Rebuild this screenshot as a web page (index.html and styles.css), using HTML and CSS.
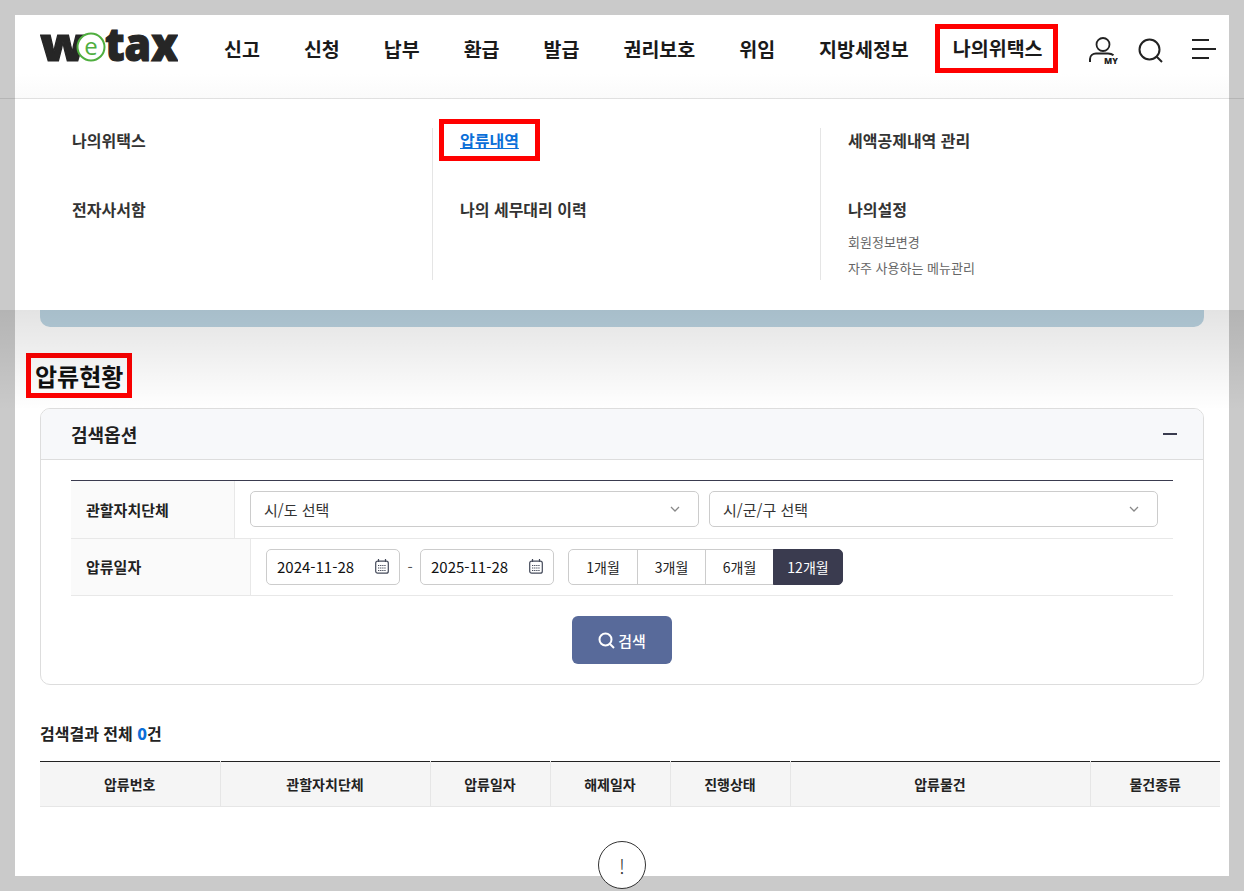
FILE: index.html
```html
<!DOCTYPE html>
<html lang="ko">
<head>
<meta charset="utf-8">
<title>wetax 압류현황</title>
<link rel="stylesheet" href="styles.css">
</head>
<body>
<div class="frame">
  <header class="header">
    <a class="logo" href="#" aria-label="wetax">
      <svg width="138" height="36" viewBox="0 0 138 36">
        <text class="logo-text" x="0" y="33" textLength="46" lengthAdjust="spacingAndGlyphs">w</text>
        <circle cx="51" cy="19" r="13.5" fill="#fff" stroke="#4fae3f" stroke-width="2"/>
        <text class="logo-e" x="51" y="27" text-anchor="middle">e</text>
        <text class="logo-text" x="65" y="33" textLength="73" lengthAdjust="spacingAndGlyphs">tax</text>
      </svg>
    </a>
    <nav class="nav">
      <a href="#">신고</a>
      <a href="#">신청</a>
      <a href="#">납부</a>
      <a href="#">환급</a>
      <a href="#">발급</a>
      <a href="#">권리보호</a>
      <a href="#">위임</a>
      <a href="#">지방세정보</a>
      <a href="#" class="nav-active">나의위택스</a>
    </nav>
    <div class="tools">
      <svg class="icon-my" width="30" height="30" viewBox="0 0 30 30">
        <circle cx="15" cy="8.5" r="6.5" fill="none" stroke="#222" stroke-width="1.8"/>
        <path d="M2 26v-3c0-3.500 3-5.500 6-5.500h12c2 0 4 .5 5.500 1.800" fill="none" stroke="#222" stroke-width="2"/>
        <text x="16" y="28" class="my-text">MY</text>
      </svg>
      <svg class="icon-search" width="26" height="26" viewBox="0 0 26 26">
        <circle cx="11.500" cy="11.500" r="10" fill="none" stroke="#222" stroke-width="2"/>
        <path d="M18.500 18.500L24 24" stroke="#222" stroke-width="2"/>
      </svg>
      <svg class="icon-menu" width="24" height="22" viewBox="0 0 24 22">
        <path d="M0 2h17M0 11h24M0 20h17" stroke="#222" stroke-width="2"/>
      </svg>
    </div>
  </header>

  <main class="main">
    <div class="band"></div>
    <h1 class="title">압류현황</h1>

    <section class="panel">
      <div class="panel-head">
        <h2>검색옵션</h2>
        <span class="minus"></span>
      </div>
      <div class="panel-body">
        <div class="form">
          <div class="form-row">
            <div class="form-label">관할자치단체</div>
            <div class="form-field">
              <div class="select"><span>시/도 선택</span>
                <svg width="10" height="6" viewBox="0 0 10 6"><path d="M1 1l4 4 4-4" fill="none" stroke="#888" stroke-width="1.300"/></svg>
              </div>
              <div class="select"><span>시/군/구 선택</span>
                <svg width="10" height="6" viewBox="0 0 10 6"><path d="M1 1l4 4 4-4" fill="none" stroke="#888" stroke-width="1.300"/></svg>
              </div>
            </div>
          </div>
          <div class="form-row">
            <div class="form-label">압류일자</div>
            <div class="form-field">
              <div class="date"><span>2024-11-28</span>
                <svg width="14" height="15" viewBox="0 0 14 15"><rect x=".7" y="2.200" width="12.600" height="12" rx="2" fill="none" stroke="#444a5a" stroke-width="1.200"/><path d="M3.500 0v3M10.500 0v3" stroke="#444a5a" stroke-width="1.200"/><path d="M3 6.500h8M3 9h8M3 11.500h8" stroke="#444a5a" stroke-width="1.200" stroke-dasharray="1.300 .8"/></svg>
              </div>
              <span class="dash">-</span>
              <div class="date"><span>2025-11-28</span>
                <svg width="14" height="15" viewBox="0 0 14 15"><rect x=".7" y="2.200" width="12.600" height="12" rx="2" fill="none" stroke="#444a5a" stroke-width="1.200"/><path d="M3.500 0v3M10.500 0v3" stroke="#444a5a" stroke-width="1.200"/><path d="M3 6.500h8M3 9h8M3 11.500h8" stroke="#444a5a" stroke-width="1.200" stroke-dasharray="1.300 .8"/></svg>
              </div>
              <div class="periods">
                <a href="#">1개월</a>
                <a href="#">3개월</a>
                <a href="#">6개월</a>
                <a href="#" class="on">12개월</a>
              </div>
            </div>
          </div>
        </div>
        <div class="actions">
          <button class="search-btn" type="button">
            <svg width="17" height="17" viewBox="0 0 17 17"><circle cx="7.500" cy="7.500" r="6" fill="none" stroke="#fff" stroke-width="2"/><path d="M12 12l4 4" stroke="#fff" stroke-width="2"/></svg>
            검색
          </button>
        </div>
      </div>
    </section>

    <p class="result">검색결과 전체 <b>0</b>건</p>

    <table class="grid">
      <colgroup>
        <col class="c1"><col class="c2"><col class="c3"><col class="c3"><col class="c3"><col class="c4"><col>
      </colgroup>
      <thead>
        <tr>
          <th>압류번호</th><th>관할자치단체</th><th>압류일자</th><th>해제일자</th><th>진행상태</th><th>압류물건</th><th>물건종류</th>
        </tr>
      </thead>
    </table>

    <div class="empty"><span>!</span></div>
  </main>

  <div class="mega">
    <div class="mega-col first">
      <a class="m1" href="#">나의위택스</a>
      <a class="m1" href="#">전자사서함</a>
    </div>
    <div class="mega-col">
      <a class="m1 mark" href="#">압류내역</a>
      <a class="m1" href="#">나의 세무대리 이력</a>
    </div>
    <div class="mega-col">
      <a class="m1" href="#">세액공제내역 관리</a>
      <a class="m1" href="#">나의설정</a>
      <a class="m2" href="#">회원정보변경</a>
      <a class="m2" href="#">자주 사용하는 메뉴관리</a>
    </div>
  </div>
</div>
<div class="rule"></div>
<div class="shade"></div>
</body>
</html>
```
FILE: styles.css
```css
* { box-sizing: border-box; }
html, body { margin: 0; height: 891px; overflow: hidden; }
body {
  position: relative;
  background: #cacaca;
  font-family: "Noto Sans CJK KR", "Noto Sans", sans-serif;
  color: #222;
  padding: 15px;
}
a { color: inherit; text-decoration: none; }

.frame {
  position: relative;
  width: 1214px;
  height: 861px;
  background: #fff;
}

.header {
  display: flex;
  align-items: center;
  height: 84px;
  padding: 0 13px 0 25px;
  background: linear-gradient(#fff 70%, #fafafa);
}
.logo { display: block; width: 138px; height: 36px; margin-top: -23px; }
.logo svg { display: block; }
.logo-text {
  font-family: "Open Sans", sans-serif;
  font-weight: 800;
  font-size: 46px;
  fill: #262626;
  stroke: #262626;
  stroke-width: 1.2px;
}
.logo-e {
  font-family: "Open Sans", sans-serif;
  font-size: 24px;
  fill: #4fae3f;
}

.nav {
  display: flex;
  align-items: center;
  gap: 44px;
  margin-left: 46px;
  margin-top: -17px;
  font-size: 19.500px;
  font-weight: 700;
  color: #1a1a1a;
  white-space: nowrap;
}
.nav-active {
  border: 5px solid #f00;
  padding: 4px 10px 6px 13px;
  margin: 0 -15px 0 -18px;
}

.tools { display: flex; align-items: center; margin-left: auto; margin-top: -17px; }
.icon-my { margin-right: 20px; margin-top: 4px; }
.icon-search { margin-right: 28px; margin-top: 4px; }
.my-text { font-family: "Open Sans", sans-serif; font-size: 8.500px; font-weight: 800; fill: #222; }

.main { padding: 0 25px; }
.band {
  height: 228px;
  background: #bcd5e3;
  border-radius: 0 0 10px 10px;
}
.title {
  width: max-content;
  margin: 26px 0 10px -14px;
  padding: 0 4px 0 4px;
  border: 5px solid #f00;
  font-size: 24px;
  line-height: 35px;
  font-weight: 700;
  color: #111;
}

.panel {
  height: 277px;
  border: 1px solid #ddd;
  border-radius: 10px;
  overflow: hidden;
}
.panel-head {
  display: flex;
  align-items: center;
  justify-content: space-between;
  height: 51px;
  padding: 0 26px 0 30px;
  background: #f7f8fa;
  border-bottom: 1px solid #ddd;
}
.panel-head h2 { margin: 0; font-size: 18px; font-weight: 700; color: #222; }
.minus { width: 14px; height: 2px; background: #3a3b4f; }
.panel-body { padding: 20px 30px 0; }

.form { border-top: 1px solid #3a3b4f; }
.form-row {
  display: flex;
  height: 57.500px;
  border-bottom: 1px solid #e8e8e8;
}
.form-label {
  display: flex;
  align-items: center;
  width: 180px;
  padding-left: 15px;
  background: #fafafa;
  border-right: 1px solid #e8e8e8;
  font-size: 15px;
  font-weight: 700;
  color: #222;
}
.form-field {
  display: flex;
  align-items: center;
  gap: 10px;
  flex: 1;
  padding: 0 15px;
  font-size: 15px;
  color: #333;
}
.select {
  display: flex;
  align-items: center;
  justify-content: space-between;
  width: 449px;
  height: 36px;
  padding: 0 18px 0 13px;
  border: 1px solid #ccc;
  border-radius: 5px;
  background: #fff;
}
.date {
  display: flex;
  align-items: center;
  justify-content: space-between;
  width: 134px;
  height: 36px;
  padding: 0 10px;
  border: 1px solid #ccc;
  border-radius: 5px;
  color: #111;
}
.dash { width: 0; flex: 0 0 0; display: flex; justify-content: center; color: #555; }
.periods { display: flex; margin-left: 4px; }
.periods a {
  display: flex;
  align-items: center;
  justify-content: center;
  width: 69px;
  height: 36px;
  border: 1px solid #ccc;
  margin-left: -1px;
  font-size: 14px;
  color: #222;
}
.periods a:first-child { margin-left: 0; border-radius: 5px 0 0 5px; width: 70px; }
.periods a.on {
  width: 70px;
  background: #3a3b4f;
  border-color: #3a3b4f;
  color: #fff;
  border-radius: 0 5px 5px 0;
}
.actions { display: flex; justify-content: center; margin-top: 20px; }
.search-btn {
  display: flex;
  align-items: center;
  justify-content: center;
  gap: 3px;
  width: 100px;
  height: 48px;
  border: 0;
  border-radius: 6px;
  background: #586a9a;
  color: #fff;
  font: 500 15px "Noto Sans CJK KR", sans-serif;
}

.result {
  margin: 35px 0 15px;
  font-size: 16px;
  line-height: 26px;
  font-weight: 700;
  color: #222;
}
.result b { color: #0b6fd8; }

.grid {
  width: 1180px;
  border-collapse: collapse;
  table-layout: fixed;
  border-top: 1px solid #222;
}
.c1 { width: 180px; }
.c2 { width: 210px; }
.c3 { width: 120px; }
.c4 { width: 300px; }
.grid th {
  height: 45px;
  padding: 0;
  background: #f5f5f5;
  border-left: 1px solid #e6e6e6;
  border-bottom: 1px solid #e6e6e6;
  font-size: 14px;
  font-weight: 700;
  color: #222;
}
.grid th:first-child { border-left: 0; }

.empty {
  display: flex;
  align-items: center;
  justify-content: center;
  width: 48px;
  height: 48px;
  margin: 34px auto 0;
  border: 1px solid #333;
  border-radius: 50%;
  background: #fff;
  font-size: 20px;
  font-weight: 300;
  color: #333;
}

.mega {
  position: absolute;
  left: 0;
  top: 84px;
  width: 1214px;
  height: 211px;
  background: #fff;
  display: grid;
  grid-template-columns: 417px 388px 409px;
  padding-top: 29px;
  align-items: start;
}
.mega-col {
  display: flex;
  flex-direction: column;
  align-items: flex-start;
  height: 152px;
  padding-left: 27px;
  border-left: 1px solid #e5e5e5;
}
.mega-col.first { padding-left: 57px; border-left: 0; }
.m1 {
  display: block;
  height: 24px;
  line-height: 24px;
  margin-bottom: 45px;
  font-size: 16px;
  font-weight: 700;
  color: #333;
}
.m1:nth-child(2) { margin-bottom: 8px; }
.m2 {
  display: block;
  height: 26px;
  line-height: 26px;
  font-size: 13px;
  color: #666;
}
.m1.mark {
  height: 42px;
  line-height: 32px;
  border: 5px solid #f00;
  padding: 0 16px;
  margin: -9px 0 36px -21px;
  color: #0b6fd8;
  text-decoration: underline;
}

.rule {
  position: absolute;
  left: 0;
  top: 98px;
  width: 100%;
  height: 1px;
  background: rgba(0, 0, 0, .1);
}
.shade {
  position: absolute;
  left: 0;
  top: 310px;
  width: 100%;
  height: 100px;
  background: linear-gradient(rgba(0, 0, 0, .11), rgba(0, 0, 0, 0));
  pointer-events: none;
}
```
